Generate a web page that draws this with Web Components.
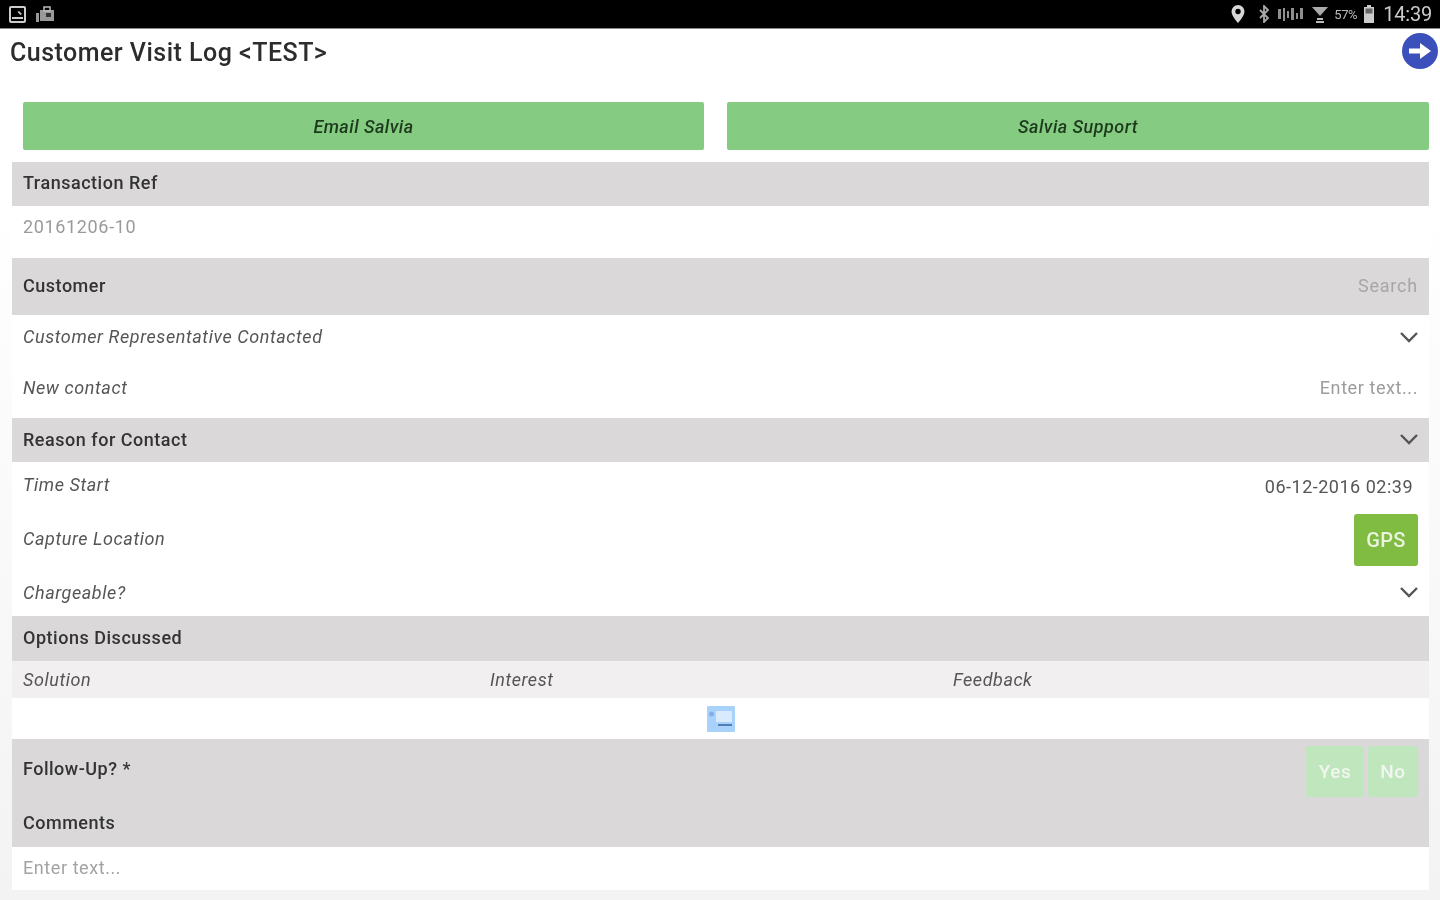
<!DOCTYPE html>
<html>
<head>
<meta charset="utf-8">
<title>Customer Visit Log</title>
<style>
  html, body { margin: 0; height: 100%; overflow: hidden; }
  html { background: #fff; }
  body { width: 1440px; height: 900px; background: linear-gradient(#fff 200px, #f4f3f4 900px); font-family: Roboto, "Liberation Sans", sans-serif; color: #333; }
  form-body { margin: 0 11px 0 12px; }
  status-bar, title-bar, form-body { filter: blur(.7px); }
</style>
</head>
<body>
<status-bar></status-bar>
<title-bar>Customer Visit Log &lt;TEST&gt;</title-bar>
<form-body>
  <action-buttons></action-buttons>
  <section-head height="44" lift="4" label="Transaction Ref"></section-head>
  <form-row height="52" lift="12" plain><span slot="left" style="color:#9a9a9a;letter-spacing:.65px">20161206-10</span></form-row>
  <section-head height="57" lift="2" label="Customer"><span style="color:#a8a6a7;letter-spacing:.8px">Search</span></section-head>
  <form-row height="51" lift="8" endlift="8" label="Customer Representative Contacted"><drop-arrow></drop-arrow></form-row>
  <form-row height="52" lift="10" endlift="10" label="New contact"><span style="color:#9c9c9c">Enter text...</span></form-row>
  <section-head height="44" lift="2" label="Reason for Contact"><drop-arrow></drop-arrow></section-head>
  <form-row height="51" lift="6" endlift="2" label="Time Start"><span style="color:#555;margin-right:5px;letter-spacing:.5px">06-12-2016 02:39</span></form-row>
  <form-row height="53" lift="2" label="Capture Location"><gps-button></gps-button></form-row>
  <form-row height="50" lift="-2" endlift="-2" label="Chargeable?"><drop-arrow></drop-arrow></form-row>
  <section-head height="45" lift="2" label="Options Discussed"></section-head>
  <options-header></options-header>
  <add-row></add-row>
  <follow-up></follow-up>
  <form-row height="43" lift="2" plain><span slot="left" style="color:#a3a3a3">Enter text...</span></form-row>
</form-body>
<script>
function applyLift(el, value) {
  const n = parseInt(value || "0");
  if (n > 0) el.style.paddingBottom = n + "px";
  if (n < 0) el.style.paddingTop = -n + "px";
}

class StatusBar extends HTMLElement {
  constructor() {
    super();
    this.attachShadow({ mode: "open" });
    this.shadowRoot.innerHTML = `
    <style>
      :host { display: flex; align-items: center; height: 29px; background: #000; color: #d6d6d6; padding: 0 8px; box-sizing: border-box; border-bottom: 1px solid #888; }
      svg { display: block; }
      .left { display: flex; gap: 7px; align-items: center; }
      .right { margin-left: auto; display: flex; align-items: center; gap: 5px; }
      .time { font-size: 20px; letter-spacing: -.2px; color: #ccc; margin-left: 2px; }
      .pct { font-size: 13px; color: #bbb; letter-spacing: -.4px; margin-left: -1px; }
    </style>
    <div class="left">
      <svg width="20" height="19" viewBox="0 0 20 19"><rect x="2" y="2" width="15" height="15" rx="1" fill="none" stroke="#ccc" stroke-width="2"/><path d="M4 12h11v2H4z M11 6l3 3-1.500 1-3-3z" fill="#ccc"/></svg>
      <svg width="20" height="19" viewBox="0 0 20 19"><path d="M1 8h3v9H1z M5 5h14v11H5z" fill="#999"/><rect x="9" y="2" width="6" height="4" fill="none" stroke="#bbb" stroke-width="1.500"/><rect x="11" y="8" width="5" height="4" fill="#333"/></svg>
    </div>
    <div class="right">
      <svg width="16" height="20" viewBox="0 0 16 20"><path d="M8 1a6.500 6.500 0 0 0-6.500 6.500C1.500 12 8 19 8 19s6.500-7 6.500-11.500A6.500 6.500 0 0 0 8 1z" fill="#d8d8d8"/><circle cx="8" cy="7.500" r="2.700" fill="#000"/></svg>
      <svg width="12" height="18" viewBox="0 0 12 18" style="margin-left:7px"><path d="M2 5l8 8-4 4V1l4 4-8 8" fill="none" stroke="#aaa" stroke-width="1.800"/></svg>
      <svg width="28" height="18" viewBox="0 0 28 18" style="margin-left:2px"><path d="M1 4h3v10H1z M6 3h2v13H6z M10 6h2v7h-2z M14 3h3v12h-3z M19 8h2v6h-2z M23 3h3v11h-3z" fill="#8f8f8f"/></svg>
      <svg width="20" height="20" viewBox="0 0 20 20"><path d="M2 3h16l-8 9z" fill="#aaa"/><path d="M7 14h6v2H7z M6 17h8v2H6z" fill="#bbb"/></svg>
      <span class="pct">57%</span>
      <svg width="14" height="20" viewBox="0 0 14 20"><path d="M5 1h4v2h3v16H2V3h3z" fill="#ccc"/><rect x="3.500" y="4.500" width="7" height="5" fill="#666"/></svg>
      <span class="time">14:39</span>
    </div>`;
  }
}

class TitleBar extends HTMLElement {
  constructor() {
    super();
    this.attachShadow({ mode: "open" });
    this.shadowRoot.innerHTML = `
    <style>
      :host { display: flex; align-items: flex-start; justify-content: space-between; height: 61px; padding: 6px 2px 0 10px; box-sizing: border-box; }
      .name { font-size: 25px; font-weight: 500; color: #2c2c2c; line-height: 36px; letter-spacing: .48px; }
      svg { display: block; margin-top: -2px; }
    </style>
    <div class="name"><slot></slot></div>
    <svg width="36" height="36" viewBox="0 0 36 36"><circle cx="18" cy="18" r="18" fill="#3b50bb"/><path d="M7 15.500h11V10l11 8-11 8v-5.500H7z" fill="#fff"/></svg>`;
  }
}

class ActionButtons extends HTMLElement {
  constructor() {
    super();
    this.attachShadow({ mode: "open" });
    this.shadowRoot.innerHTML = `
    <style>
      :host { display: grid; grid-template-columns: 681px 702px; gap: 23px; padding: 12px 0 12px 11px; }
      div { height: 48px; background: #85cc82; border-radius: 2px; display: flex; align-items: center; justify-content: center; font: italic 500 18px Roboto, "Liberation Sans", sans-serif; letter-spacing: .45px; color: #1d3a1d; }
    </style>
    <div>Email Salvia</div><div>Salvia Support</div>`;
  }
}

class SectionHead extends HTMLElement {
  constructor() {
    super();
    this.attachShadow({ mode: "open" });
    this.shadowRoot.innerHTML = `
    <style>
      :host { display: flex; align-items: center; justify-content: space-between; background: #dad8d9; padding: 0 11px; box-sizing: border-box; font-size: 18px; font-weight: 500; color: #333; letter-spacing: .52px; }
      .end { font-weight: 400; }
    </style>
    <span class="label"></span><span class="end"><slot></slot></span>`;
  }
  connectedCallback() {
    this.style.height = this.getAttribute("height") + "px";
    applyLift(this, this.getAttribute("lift"));
    this.shadowRoot.querySelector(".label").textContent = this.getAttribute("label");
  }
}

class FormRow extends HTMLElement {
  constructor() {
    super();
    this.attachShadow({ mode: "open" });
    this.shadowRoot.innerHTML = `
    <style>
      :host { display: flex; align-items: center; justify-content: space-between; background: #fff; padding: 0 11px; box-sizing: border-box; font-size: 18px; color: #555; letter-spacing: .58px; }
      .label { font-style: italic; }
      .start, .end { display: block; }
    </style>
    <span class="start"><span class="label"></span><slot name="left"></slot></span><span class="end"><slot></slot></span>`;
  }
  connectedCallback() {
    this.style.height = this.getAttribute("height") + "px";
    applyLift(this.shadowRoot.querySelector(".start"), this.getAttribute("lift"));
    applyLift(this.shadowRoot.querySelector(".end"), this.getAttribute("endlift"));
    this.shadowRoot.querySelector(".label").textContent = this.getAttribute("label") || "";
  }
}

class DropArrow extends HTMLElement {
  constructor() {
    super();
    this.attachShadow({ mode: "open" });
    this.shadowRoot.innerHTML = `
    <style>:host { display: block; margin-right: -1px; } svg { display: block; }</style>
    <svg width="20" height="12" viewBox="0 0 20 12"><path d="M2 2l8 8 8-8" fill="none" stroke="#555" stroke-width="2.400"/></svg>`;
  }
}

class GpsButton extends HTMLElement {
  constructor() {
    super();
    this.attachShadow({ mode: "open" });
    this.shadowRoot.innerHTML = `
    <style>
      :host { display: flex; align-items: center; justify-content: center; width: 64px; height: 52px; background: #80bb42; border-radius: 3px; color: #eaf3de; font-size: 20px; font-weight: 500; letter-spacing: .3px; }
    </style>GPS`;
  }
}

class OptionsHeader extends HTMLElement {
  constructor() {
    super();
    this.attachShadow({ mode: "open" });
    this.shadowRoot.innerHTML = `
    <style>
      :host { display: grid; grid-template-columns: 467px 463px 1fr; align-items: center; height: 37px; padding-left: 11px; background: #f1eff0; font-size: 18px; font-style: italic; color: #555; letter-spacing: .55px; }
    </style>
    <span>Solution</span><span>Interest</span><span>Feedback</span>`;
  }
}

class AddRow extends HTMLElement {
  constructor() {
    super();
    this.attachShadow({ mode: "open" });
    this.shadowRoot.innerHTML = `
    <style>
      :host { display: flex; align-items: center; justify-content: center; height: 41px; background: #fff; }
      svg { display: block; }
    </style>
    <svg width="28" height="26" viewBox="0 0 28 26"><rect width="28" height="26" rx="1" fill="#a9d2fb"/><rect x="9" y="5" width="16" height="11" fill="#d9eafc"/><circle cx="4.500" cy="8" r="2.500" fill="#7fb0e8"/><rect x="11" y="18" width="14" height="2" fill="#4f7fb5"/></svg>`;
  }
}

class FollowUp extends HTMLElement {
  constructor() {
    super();
    this.attachShadow({ mode: "open" });
    this.shadowRoot.innerHTML = `
    <style>
      :host { display: block; height: 108px; background: #dad8d9; padding: 0 11px; box-sizing: border-box; font-size: 18px; font-weight: 500; color: #333; letter-spacing: .5px; }
      .top { display: flex; justify-content: space-between; align-items: center; height: 64px; }
      .top > span { padding-bottom: 6px; }
      .btns { display: flex; gap: 4px; }
      .btn { height: 51px; background: #bfe6bd; border-radius: 3px; display: flex; align-items: center; justify-content: center; color: #f1f7f0; font-size: 19px; }
      .yes { width: 58px; } .no { width: 50px; }
      .bottom { height: 32px; display: flex; align-items: center; margin-top: 3px; }
    </style>
    <div class="top"><span>Follow-Up? *</span><div class="btns"><div class="btn yes">Yes</div><div class="btn no">No</div></div></div>
    <div class="bottom">Comments</div>`;
  }
}

customElements.define("status-bar", StatusBar);
customElements.define("title-bar", TitleBar);
customElements.define("action-buttons", ActionButtons);
customElements.define("section-head", SectionHead);
customElements.define("form-row", FormRow);
customElements.define("drop-arrow", DropArrow);
customElements.define("gps-button", GpsButton);
customElements.define("options-header", OptionsHeader);
customElements.define("add-row", AddRow);
customElements.define("follow-up", FollowUp);
customElements.define("form-body", class extends HTMLElement {
  constructor() {
    super();
    this.attachShadow({ mode: "open" }).innerHTML = `<style>:host { display: block; }</style><slot></slot>`;
  }
});
</script>
</body>
</html>
